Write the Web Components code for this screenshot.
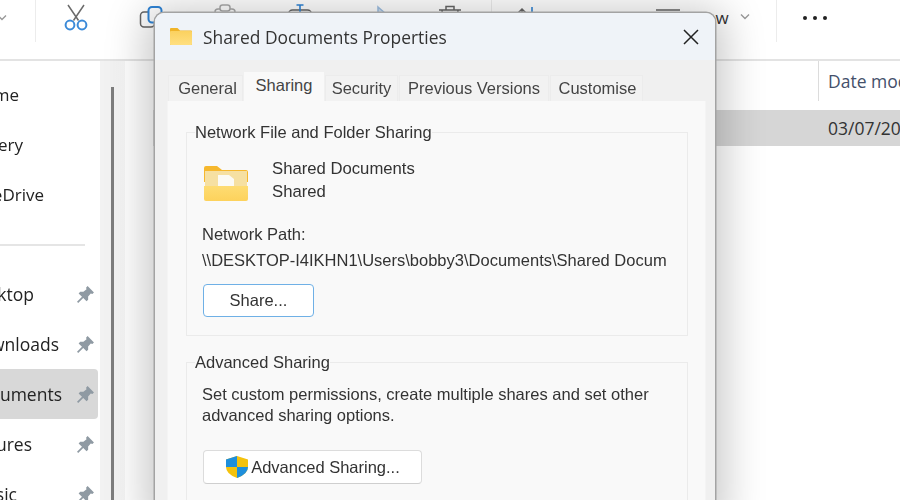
<!DOCTYPE html>
<html lang="en"><head><meta charset="utf-8"><title>Shared Documents Properties</title>
<style>
html,body{margin:0;height:100%;overflow:hidden;background:#fff}
body{width:900px;height:500px;position:relative;font-family:"Open Sans","Noto Sans",sans-serif}
</style></head><body>
<x-explorer></x-explorer>
<script>
const pin=`<svg width="19" height="19" viewBox="0 0 18 18"><path d="M11 1 17 7 15.500 8.500 14 8 11.500 11 11.500 14 10 15.500 2.500 8 4 6.500 7 6.500 10 4 9.500 2.500Z" fill="#8f9aa3"/><path d="M6.500 11.500 1.500 16.500" stroke="#8f9aa3" stroke-width="1.600"/></svg>`;
const icons={
 scissors:`<svg width="26" height="32" viewBox="0 0 26 32" fill="none"><path d="M5 3 15.500 18.500M21 3 10.500 18.500" stroke="#6b6b6b" stroke-width="1.500"/><circle cx="7" cy="23" r="4.400" stroke="#3b8ad8" stroke-width="2"/><circle cx="19" cy="23" r="4.400" stroke="#3b8ad8" stroke-width="2"/></svg>`,
 copy:`<svg width="26" height="32" viewBox="0 0 26 32" fill="none"><rect x="3.500" y="12" width="14" height="15" rx="3.500" stroke="#666" stroke-width="1.500"/><rect x="11.500" y="7" width="13" height="15.500" rx="3.500" fill="#fff" stroke="#2f84d6" stroke-width="2"/></svg>`,
 paste:`<svg width="26" height="32" viewBox="0 0 26 32" fill="none"><rect x="3" y="9" width="20" height="22" rx="3" stroke="#aaa" stroke-width="1.500"/><rect x="8" y="5" width="10" height="6" rx="2.500" fill="#fff" stroke="#aaa" stroke-width="1.500"/></svg>`,
 rename:`<svg width="26" height="32" viewBox="0 0 26 32" fill="none"><rect x="1.500" y="10" width="23" height="16" rx="4" stroke="#666" stroke-width="1.500"/><path d="M13 5V30M9.500 5h7" stroke="#2f84d6" stroke-width="1.600"/></svg>`,
 share:`<svg width="26" height="32" viewBox="0 0 26 32" fill="none"><path d="M3 30V17q0-3 3-3h9" stroke="#bbb" stroke-width="1.500"/><path d="M16 7 24 14 16 21Z" fill="#cfe0f3" stroke="#9dbfe2" stroke-width="1.500"/></svg>`,
 trash:`<svg width="26" height="32" viewBox="0 0 26 32" fill="none"><path d="M2 10h22M9 10V6.500h8V10M5 10l1.500 22h13L21 10" stroke="#666" stroke-width="1.500"/></svg>`,
 sort:`<svg width="24" height="32" viewBox="0 0 24 32" fill="none"><path d="M7 28V9M2 14l5-5 5 5" stroke="#666" stroke-width="1.500"/><path d="M17 7v20" stroke="#2f84d6" stroke-width="1.600"/></svg>`,
 view:`<svg width="28" height="32" viewBox="0 0 28 32" fill="none"><path d="M2 10h24M2 18h24M2 26h24" stroke="#666" stroke-width="1.500"/></svg>`
};
function def(name,css,html){customElements.define(name,class extends HTMLElement{connectedCallback(){if(this.shadowRoot)return;const r=this.attachShadow({mode:'open'});r.innerHTML=`<style>${css}</style>`+(typeof html==='function'?html(this):html);}})}

def('x-tool',`:host{display:flex;justify-content:center;flex:none;height:32px}`,h=>icons[h.getAttribute('icon')]);
def('x-vsep',`:host{display:block;flex:none;width:1px;height:42px;background:#ececec}`,'');

def('x-toolbar',`
:host{display:flex;align-items:flex-start;height:59px;flex:none;border-bottom:2px solid #e3e3e3;overflow:hidden;font-size:17px;color:#333;background:#fff;box-sizing:content-box}
.chev{width:35px;flex:none;padding-top:14px}
.gap{display:block;flex:none}
.t{line-height:32px;flex:none;margin-top:2px}
`,`
<div class="chev"><svg style="display:block;margin-left:-4px" width="12" height="8" viewBox="0 0 12 8" fill="none"><path d="M2 1.500 6 5.500 10 1.500" stroke="#999" stroke-width="1.400"/></svg></div>
<x-vsep></x-vsep>
<span class="gap" style="width:27px"></span>
<x-tool icon="scissors" style="margin-top:2px"></x-tool>
<span class="gap" style="width:48px"></span>
<x-tool icon="copy"></x-tool>
<span class="gap" style="width:49px"></span>
<x-tool icon="paste"></x-tool>
<span class="gap" style="width:49px"></span>
<x-tool icon="rename"></x-tool>
<span class="gap" style="width:49px"></span>
<x-tool icon="share"></x-tool>
<span class="gap" style="width:49px"></span>
<x-tool icon="trash"></x-tool>
<span class="gap" style="width:28px"></span>
<x-vsep></x-vsep>
<span class="gap" style="width:23px"></span>
<x-tool icon="sort"></x-tool>
<span class="t" style="margin-left:18px">Sort</span>
<span class="gap" style="width:64px"></span>
<x-tool icon="view"></x-tool>
<span class="t" style="margin-left:10px">View</span>
<svg style="flex:none;margin:13px 0 0 10px" width="12" height="8" viewBox="0 0 12 8" fill="none"><path d="M2 1.500 6 5.500 10 1.500" stroke="#999" stroke-width="1.400"/></svg>
<span class="gap" style="width:25px"></span>
<x-vsep></x-vsep>
<svg style="flex:none;margin:15px 0 0 25px" width="26" height="6" viewBox="0 0 26 6"><circle cx="3" cy="3" r="2" fill="#222"/><circle cx="13" cy="3" r="2" fill="#222"/><circle cx="23" cy="3" r="2" fill="#222"/></svg>
`);

def('x-nav-item',`
:host{display:flex;align-items:center;height:50px;width:98px;flex:none;border-radius:0 4px 4px 0;font-size:17px;color:#222;overflow:hidden;position:relative;white-space:nowrap}
:host([pin]){font-size:17.500px}
:host([sel]){background:#d8d8d8}
.l{flex:1;min-width:0;display:flex;justify-content:flex-end;overflow:hidden}
.l span{flex:none}
.p{flex:none;width:28px;display:flex;justify-content:center;padding-left:2px;box-sizing:border-box}
`,h=>{const end=+h.getAttribute('end');return `<div class="l" style="${h.hasAttribute('pin')?`padding-right:${70-end}px;padding-bottom:1px`:`flex:none;width:${end}px`}"><span>${h.getAttribute('label')}</span></div>${h.hasAttribute('pin')?`<div class="p">${pin}</div>`:''}`});

def('x-sidebar',`
:host{display:flex;flex-direction:column;width:100px;flex:none;background:#fff;padding-top:8px;box-sizing:border-box;overflow:hidden}
hr{border:0;height:2px;background:#e5e5e5;margin:0;flex:none;width:85px}
.s{height:25px;flex:none}.t{height:23px;flex:none}
`,`
<x-nav-item label="Home" end="19"></x-nav-item>
<x-nav-item label="Gallery" end="23"></x-nav-item>
<x-nav-item label="OneDrive" end="44"></x-nav-item>
<div class="s"></div><hr><div class="t"></div>
<x-nav-item label="Desktop" end="34" pin></x-nav-item>
<x-nav-item label="Downloads" end="59" pin></x-nav-item>
<x-nav-item label="Documents" end="62" pin sel></x-nav-item>
<x-nav-item label="Pictures" end="32" pin></x-nav-item>
<x-nav-item label="Music" end="17" pin></x-nav-item>
`);

def('x-track',`
:host{display:block;width:25px;flex:none;background:linear-gradient(90deg,#f2f2f2,#f2f2f2 60%,#f6f6f6);padding-top:26px;box-sizing:border-box}
i{display:block;width:3px;height:100%;background:#7d7d7d;margin-left:11px}
`,'<i></i>');

def('x-files',`
:host{display:flex;flex-direction:column;flex:1;min-width:0;background:#fff;font-size:17.500px;color:#333;overflow:hidden}
.h{display:flex;justify-content:flex-end;height:40px;flex:none;overflow:hidden;white-space:nowrap}
.c{flex:none;width:82px;border-left:1px solid #dcdcdc;padding-left:9px;line-height:40px;box-sizing:border-box;overflow:hidden;color:#44506a}
.r{display:flex;justify-content:flex-end;height:36px;margin-top:9px;margin-left:28px;background:#d6d6d6;flex:none;white-space:nowrap}
.d{flex:none;width:72px;line-height:36px;overflow:hidden}
`,`
<div class="h"><div class="c">Date modified</div></div>
<div class="r"><div class="d">03/07/2024 10:15</div></div>
`);

def('x-explorer',`
:host{display:flex;flex-direction:column;width:900px;height:500px;overflow:hidden;position:relative;filter:blur(.55px)}
.b{display:flex;flex:1;min-height:0}
`,`
<x-toolbar></x-toolbar>
<div class="b"><x-sidebar></x-sidebar><x-track></x-track><x-files></x-files></div>
<x-dialog></x-dialog>
`);

def('x-tab',`
:host{display:block;flex:none;height:26px;line-height:24px;background:#f2f2f2;border:1px solid #ececec;border-bottom:0;box-sizing:border-box;text-align:center;font-size:16.500px;color:#444;white-space:nowrap}
:host([active]){height:30px;line-height:24px;background:#f9f9f9;border-color:#f9f9f9;margin-bottom:-1px;position:relative;z-index:1}
`,'<slot></slot>');

def('x-group',`
:host{display:block;font-size:16.500px;color:#333}
fieldset{margin:0;border:1px solid #ebebeb;border-radius:0;padding:0 15px;min-width:0;height:var(--h);box-sizing:border-box}
legend{padding:0;margin-left:-7px;line-height:19px;font-size:16.500px;color:#333}
`,h=>`<fieldset style="--h:${h.getAttribute('h')}px"><legend>${h.getAttribute('title')}</legend><slot></slot></fieldset>`);

def('x-btn',`
:host{display:inline-flex;align-items:center;justify-content:center;box-sizing:border-box;height:34px;background:#fff;border:1px solid #dcdcdc;border-bottom-color:#cfcfcf;border-radius:4px;font-size:16.500px;color:#333;gap:2px}
:host([primary]){border:1.500px solid #6fb0e6;height:33px}
`,'<slot></slot>');

def('x-dialog',`
:host{position:absolute;left:155px;top:13px;width:560px;height:500px;display:flex;flex-direction:column;background:#f0f0f0;border-radius:9px 9px 0 0;box-shadow:0 0 0 1.500px #a3a3a3,0 6px 40px 10px rgba(0,0,0,.22);font-family:"Liberation Sans",Arial,sans-serif;overflow:hidden;box-sizing:border-box}
.tb{height:47px;flex:none;background:#eff3f8;display:flex;align-items:center;padding:0 15px;gap:11px}
.ti{flex:1;font:17.400px "Open Sans","Noto Sans",sans-serif;color:#333;white-space:nowrap;line-height:22px;margin-top:1px}
.tabs{display:flex;align-items:flex-end;height:41px;padding-left:13px;flex:none;gap:1px}
.panel{background:#f9f9f9;margin:0 9px 0 12px;flex:1;padding:22px 17px 0 18px;display:flex;flex-direction:column;gap:17px;border-left:1px solid #f4f4f4;border-right:1px solid #f4f4f4;box-sizing:border-box}
.f{display:flex;align-items:flex-start;margin-top:12px;margin-left:2px;gap:24px;height:52px}
.n{line-height:23px;padding-top:3px;white-space:nowrap;font-size:16.700px}
.np{margin-top:15px;line-height:26px;white-space:nowrap;overflow:hidden;height:52px;width:465px}
.sb{margin-top:11px;display:flex;padding-left:1px}
.p{line-height:21px;margin-top:12px;white-space:nowrap}
.sb2{margin-top:24px;display:flex;padding-left:1px}
.x{flex:none;display:block}
`,`
<div class="tb">
 <svg class="x" width="22" height="17" viewBox="0 0 22 17"><path d="M0 1q0-1 1-1h6.500l2.500 2.500h11q1 0 1 1V16q0 1-1 1H1q-1 0-1-1Z" fill="#f0b429"/><rect y="3" width="22" height="14" rx="1" fill="url(#g)"/><defs><linearGradient id="g" x1="0" x2="0" y1="0" y2="1"><stop offset="0" stop-color="#fbd15f"/><stop offset="1" stop-color="#ffdf80"/></linearGradient></defs></svg>
 <div class="ti">Shared Documents Properties</div>
 <svg class="x" width="18" height="18" viewBox="0 0 18 18" fill="none"><path d="M2 2 16 16M16 2 2 16" stroke="#222" stroke-width="1.500"/></svg>
</div>
<div class="tabs">
 <x-tab style="width:75px;padding-left:4px">General</x-tab>
 <x-tab active style="width:80px">Sharing</x-tab>
 <x-tab style="width:73px">Security</x-tab>
 <x-tab style="width:150px">Previous Versions</x-tab>
 <x-tab style="width:93px;padding-left:2px">Customise</x-tab>
</div>
<div class="panel">
 <x-group h="213" title="Network File and Folder Sharing">
  <div class="f">
   <svg class="x" style="margin-top:12px" width="44" height="35" viewBox="0 0 44 35"><path d="M0 2q0-2 2-2h11l5 4h24q2 0 2 2v10H0Z" fill="#f6b82e"/><rect x="1" y="5" width="42" height="16" fill="#f6e0a2"/><path d="M14 9h11l5 4v9H14Z" fill="#fbfaf5"/><path d="M0 20h44v13q0 2-2 2H2q-2 0-2-2Z" fill="url(#gf)"/><defs><linearGradient id="gf" x1="0" x2="0" y1="0" y2="1"><stop offset="0" stop-color="#fedc72"/><stop offset="1" stop-color="#fdd25c"/></linearGradient></defs></svg>
   <div class="n">Shared Documents<br>Shared</div>
  </div>
  <div class="np">Network Path:<br>\\\\DESKTOP-I4IKHN1\\Users\\bobby3\\Documents\\Shared Documents</div>
  <div class="sb"><x-btn primary style="width:111px">Share...</x-btn></div>
 </x-group>
 <x-group h="200" title="Advanced Sharing">
  <div class="p">Set custom permissions, create multiple shares and set other<br>advanced sharing options.</div>
  <div class="sb2"><x-btn style="width:219px"><svg width="24" height="24" viewBox="0 0 24 24"><path d="M12 1 23 4.500V12Q23 19 12 23 1 19 1 12V4.500Z" fill="#f4c20d"/><path d="M12 1V12H1V4.500Z" fill="#1e8fdc"/><path d="M12 12H23Q23 19 12 23Z" fill="#1e8fdc"/></svg><span>Advanced Sharing...</span></x-btn></div>
 </x-group>
</div>
`);
</script>
</body></html>
